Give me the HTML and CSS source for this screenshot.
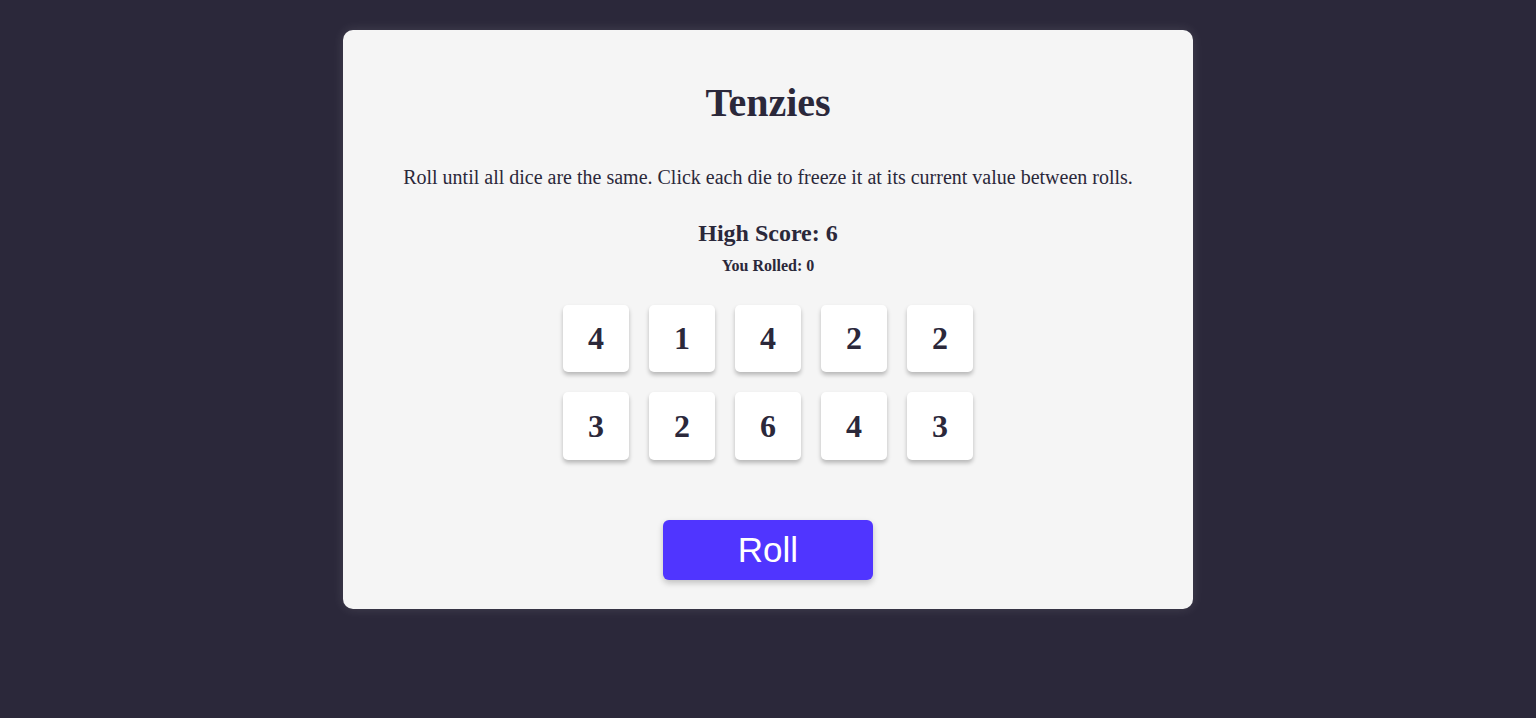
FILE: index.html
```html
<!DOCTYPE html>
<html>
<head>
<meta charset="utf-8">
<link rel="stylesheet" href="styles.css">
</head>
<body>
<main class="card">
  <h1 class="title">Tenzies</h1>
  <p class="instructions">Roll until all dice are the same. Click each die to freeze it at its current value between rolls.</p>
  <h2 class="high-score">High Score: 6</h2>
  <h3 class="rolled">You Rolled: 0</h3>
  <div class="dice">
    <div class="die">4</div>
    <div class="die">1</div>
    <div class="die">4</div>
    <div class="die">2</div>
    <div class="die">2</div>
    <div class="die">3</div>
    <div class="die">2</div>
    <div class="die">6</div>
    <div class="die">4</div>
    <div class="die">3</div>
  </div>
  <button class="roll">Roll</button>
</main>
</body>
</html>
```
FILE: styles.css
```css
html, body {
  margin: 0;
  padding: 0;
}
body {
  background: #2B283A;
  font-family: "Liberation Serif", "Times New Roman", serif;
  color: #2B283A;
  min-height: 718px;
  display: flex;
  justify-content: center;
  align-items: flex-start;
  padding-top: 30px;
  box-sizing: border-box;
}
.card {
  width: 850px;
  height: 579px;
  box-sizing: border-box;
  background: #F5F5F5;
  border-radius: 10px;
  box-shadow: 0 0 12px rgba(255, 255, 255, 0.12);
  display: flex;
  flex-direction: column;
  align-items: center;
  padding-top: 50px;
}
.title {
  font-size: 40px;
  font-weight: bold;
  margin: 0;
  line-height: 46px;
}
.instructions {
  font-size: 20px;
  margin: 40px 0 0;
  line-height: 23px;
}
.high-score {
  font-size: 24px;
  margin: 30px 0 0;
  line-height: 28px;
}
.rolled {
  font-size: 16px;
  margin: 10px 0 0;
  line-height: 17px;
}
.dice {
  display: grid;
  grid-template-columns: repeat(5, 66px);
  grid-template-rows: 67px 68px;
  column-gap: 20px;
  row-gap: 20px;
  margin-top: 31px;
}
.die {
  background: #FFFFFF;
  border-radius: 5px;
  box-shadow: 0 3px 4px rgba(0, 0, 0, 0.25);
  display: flex;
  align-items: center;
  justify-content: center;
  font-size: 32px;
  font-weight: bold;
  color: #2B283A;
}
.roll {
  margin-top: 60px;
  width: 210px;
  height: 60px;
  border: none;
  border-radius: 6px;
  background: #5035FF;
  color: #FFFFFF;
  font-family: "Liberation Sans", Arial, sans-serif;
  font-size: 35px;
  box-shadow: 0 3px 6px rgba(0, 0, 0, 0.22);
  cursor: pointer;
}
```
